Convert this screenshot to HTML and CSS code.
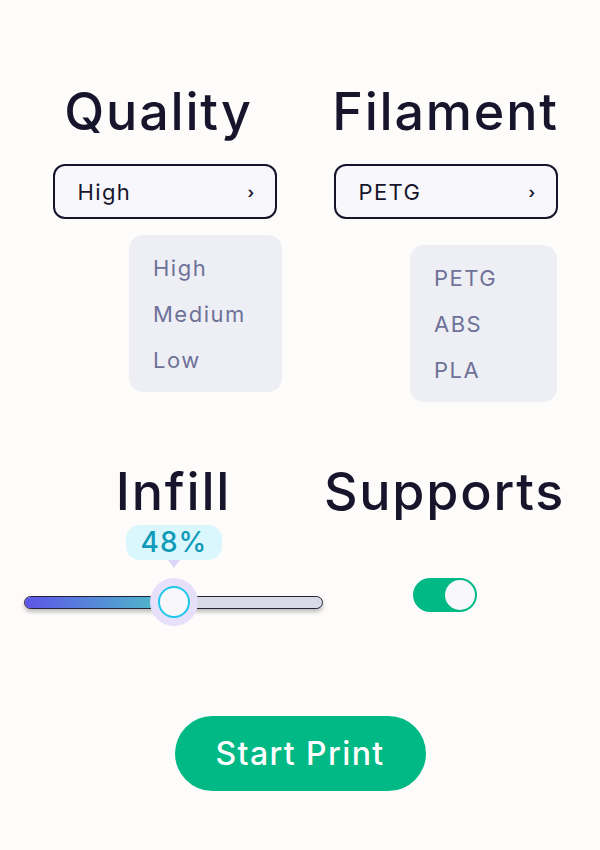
FILE: index.html
```html
<!DOCTYPE html>
<html lang="en">
<head>
<meta charset="utf-8">
<title>Print Settings</title>
<link rel="stylesheet" href="styles.css">
</head>
<body>
<main class="page">
  <section class="top-grid">
    <div class="col">
      <h2 class="heading">Quality</h2>
      <button class="select"><span>High</span><span class="chev">›</span></button>
      <ul class="menu menu-quality">
        <li>High</li>
        <li>Medium</li>
        <li>Low</li>
      </ul>
    </div>
    <div class="col">
      <h2 class="heading">Filament</h2>
      <button class="select"><span>PETG</span><span class="chev">›</span></button>
      <ul class="menu menu-filament">
        <li>PETG</li>
        <li>ABS</li>
        <li>PLA</li>
      </ul>
    </div>
  </section>

  <section class="bottom-grid">
    <div class="col">
      <h2 class="heading">Infill</h2>
      <div class="slider">
        <div class="track">
          <div class="fill" style="width:150px"></div>
        </div>
        <div class="thumb" style="left:150px">
          <div class="tip">48%</div>
        </div>
      </div>
    </div>
    <div class="col">
      <h2 class="heading">Supports</h2>
      <div class="toggle"><div class="knob"></div></div>
    </div>
  </section>

  <div class="actions">
    <button class="start">Start Print</button>
  </div>
</main>
</body>
</html>
```

FILE: styles.css
```css
* { box-sizing: border-box; }
html, body { margin: 0; padding: 0; }
body {
  background: #fdfcfa;
  font-family: "Inter", "Noto Sans", sans-serif;
  color: #16152b;
  width: 600px;
  height: 850px;
  overflow: hidden;
}
.page {
  padding: 82px 0 0 24px;
}
.top-grid {
  display: grid;
  grid-template-columns: 281px 281px;
}
.col {
  display: flex;
  flex-direction: column;
  align-items: center;
}
.heading {
  margin: 0;
  font-size: 52px;
  font-weight: 500;
  line-height: 60px;
  letter-spacing: 1.8px;
  color: #16152b;
}
.top-grid .col:first-child .heading {
  margin-right: 12px;
}
.select {
  margin-top: 22px;
  width: 224px;
  height: 55px;
  border: 2px solid #15142a;
  border-radius: 12px;
  background: #f7f7fc;
  display: flex;
  align-items: center;
  justify-content: space-between;
  padding: 0 19px 0 23px;
  font-family: inherit;
  font-size: 22px;
  letter-spacing: 1.4px;
  color: #16152b;
}
.chev {
  font-size: 16px;
  font-weight: 600;
  margin-right: 0;
}
.menu {
  list-style: none;
  margin: 16px 0 0 0;
  padding: 10px 0 9px 24px;
  align-self: flex-start;
  margin-left: 105px;
  background: #eeeff5;
  border-radius: 14px;
}
.menu-quality { width: 153px; }
.menu-filament { width: 147px; margin-top: 26px; }
.menu li {
  line-height: 46px;
  font-size: 22px;
  letter-spacing: 1.5px;
  color: #6e7298;
}
.bottom-grid {
  margin-top: 60px;
  display: grid;
  grid-template-columns: 299px 243px;
}
.slider {
  position: relative;
  width: 299px;
  height: 48px;
  margin-top: 56px;
}
.track {
  position: absolute;
  left: 0;
  right: 0;
  top: 18px;
  height: 13px;
  border-radius: 7px;
  background: #d8dae6;
  border: 1px solid #24233a;
  box-shadow: 0 3px 4px rgba(0,0,0,0.25);
  overflow: hidden;
}
.fill {
  height: 100%;
  background: linear-gradient(90deg, #5d55e8, #4cc4c4);
}
.thumb {
  position: absolute;
  top: 24px;
  width: 32px;
  height: 32px;
  margin: -16px 0 0 -16px;
  border-radius: 50%;
  background: #f7f7fc;
  border: 2px solid #1ec8ea;
  box-shadow: 0 0 0 8px #e6e0fa;
}
.tip {
  position: absolute;
  left: 50%;
  bottom: 56px;
  transform: translateX(-50%);
  width: 96px;
  height: 35px;
  border-radius: 14px;
  background: #daf7fd;
  color: #0f9ab8;
  font-size: 28px;
  font-weight: 500;
  line-height: 35px;
  text-align: center;
  letter-spacing: 1px;
}
.tip::after {
  content: "";
  position: absolute;
  left: 50%;
  top: 35px;
  margin-left: -6px;
  border-left: 6px solid transparent;
  border-right: 6px solid transparent;
  border-top: 8px solid #dcd6f8;
}
.toggle {
  margin-top: 56px;
  width: 64px;
  height: 34px;
  border-radius: 17px;
  background: #00b985;
  padding: 2px;
  display: flex;
  justify-content: flex-end;
}
.knob {
  width: 30px;
  height: 30px;
  border-radius: 50%;
  background: #f7f7fc;
}
.actions {
  display: flex;
  justify-content: center;
  padding-right: 24px;
  margin-top: 90px;
}
.start {
  width: 251px;
  height: 75px;
  border: none;
  border-radius: 38px;
  background: #00b985;
  color: #ffffff;
  font-family: inherit;
  font-size: 32px;
  font-weight: 500;
  letter-spacing: 1.4px;
}
```
